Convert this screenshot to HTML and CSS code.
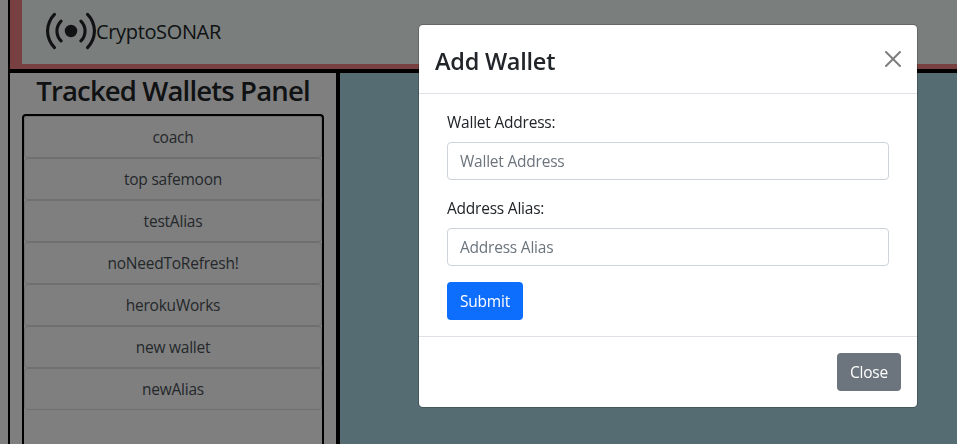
FILE: index.html
```html
<!DOCTYPE html>
<html lang="en">
<head>
<meta charset="utf-8">
<title>CryptoSONAR</title>
<link rel="stylesheet" href="styles.css">
</head>
<body>
<div class="app">
  <header class="header">
    <div class="navbar">
      <svg class="logo" viewBox="0 0 16 16" fill="currentColor"><path d="M3.05 3.05a7 7 0 0 0 0 9.9.5.5 0 0 1-.707.707 8 8 0 0 1 0-11.314.5.5 0 0 1 .707.707zm2.122 2.122a4 4 0 0 0 0 5.656.5.5 0 1 1-.708.708 5 5 0 0 1 0-7.072.5.5 0 0 1 .708.708zm5.656-.708a.5.5 0 0 1 .708 0 5 5 0 0 1 0 7.072.5.5 0 1 1-.708-.708 4 4 0 0 0 0-5.656.5.5 0 0 1 0-.708zm2.122-2.12a.5.5 0 0 1 .707 0 8 8 0 0 1 0 11.313.5.5 0 0 1-.707-.707 7 7 0 0 0 0-9.9.5.5 0 0 1 0-.707zM10 8a2 2 0 1 1-4 0 2 2 0 0 1 4 0z"/></svg>
      <span class="brand">CryptoSONAR</span>
    </div>
  </header>
  <div class="content">
    <aside class="sidebar">
      <h2 class="panel-title">Tracked Wallets Panel</h2>
      <div class="wallets">
        <div class="wallet">coach</div>
        <div class="wallet">top safemoon</div>
        <div class="wallet">testAlias</div>
        <div class="wallet">noNeedToRefresh!</div>
        <div class="wallet">herokuWorks</div>
        <div class="wallet">new wallet</div>
        <div class="wallet">newAlias</div>
      </div>
    </aside>
    <main class="main"></main>
  </div>
</div>
<div class="backdrop">
  <div class="modal">
    <div class="modal-header">
      <h4 class="modal-title">Add Wallet</h4>
      <svg class="close-icon" viewBox="0 0 16 16"><path d="M.293.293a1 1 0 0 1 1.414 0L8 6.586 14.293.293a1 1 0 1 1 1.414 1.414L9.414 8l6.293 6.293a1 1 0 0 1-1.414 1.414L8 9.414l-6.293 6.293a1 1 0 0 1-1.414-1.414L6.586 8 .293 1.707a1 1 0 0 1 0-1.414z"/></svg>
    </div>
    <form class="modal-body">
      <label class="label" for="address">Wallet Address:</label>
      <input class="input" id="address" placeholder="Wallet Address">
      <label class="label" for="alias">Address Alias:</label>
      <input class="input" id="alias" placeholder="Address Alias">
      <button class="btn submit" type="button">Submit</button>
    </form>
    <div class="modal-footer">
      <button class="btn close" type="button">Close</button>
    </div>
  </div>
</div>
</body>
</html>
```

FILE: styles.css
```css
* { box-sizing: border-box; }
body {
  margin: 0;
  height: 444px;
  overflow: hidden;
  background: #fff;
  color: #212529;
  font: 15.5px/24px "Open Sans", "Noto Sans", sans-serif;
  letter-spacing: -0.22px;
}
h2, h4 { margin: 0; }
.app {
  display: flex;
  flex-direction: column;
  height: 444px;
  margin-left: 8px;
  border-left: 2px solid #000;
}
.header {
  height: 73px;
  padding: 0 0 5px 12px;
  background: lightcoral;
  background-clip: padding-box;
  border-bottom: 4px solid #000;
}
.navbar {
  display: flex;
  align-items: center;
  height: 64px;
  padding: 0 24px 2px;
  background: mintcream;
}
.logo { width: 50px; height: 50px; }
.brand { font-size: 20px; letter-spacing: -0.35px; margin-top: 2px; }
.content { display: flex; flex: 1; }
.sidebar {
  display: flex;
  flex-direction: column;
  width: 330px;
  padding: 0 12px;
  border-right: 4px solid #000;
}
.panel-title {
  height: 41px;
  line-height: 36px;
  font-size: 27.5px;
  font-weight: 600;
  letter-spacing: -0.85px;
  text-align: center;
  white-space: nowrap;
}
.wallets {
  flex: 1;
  border: 2px solid #000;
  border-bottom: 0;
  border-radius: 4px 4px 0 0;
}
.wallet {
  height: 42px;
  line-height: 41px;
  border: 1px solid rgba(0, 0, 0, .125);
  border-radius: 4px;
  color: #495057;
  text-align: center;
}
.main { flex: 1; background: lightblue; }
.backdrop {
  position: fixed;
  inset: 0;
  padding: 24px 0 0 418px;
  background: rgba(0, 0, 0, .5);
}
.modal {
  width: 500px;
  height: 384px;
  background: #fff;
  background-clip: padding-box;
  border: 1px solid rgba(0, 0, 0, .2);
  border-radius: 5px;
}
.modal-header {
  display: flex;
  align-items: center;
  justify-content: space-between;
  height: 69px;
  padding: 0 16px;
  border-bottom: 1px solid #dee2e6;
}
.modal-title {
  font-size: 23.5px;
  font-weight: 600;
  line-height: 36px;
  letter-spacing: -0.25px;
  padding-bottom: 0;
  margin-top: 3px;
}
.close-icon { width: 16px; height: 16px; opacity: .5; }
.modal-body {
  display: flex;
  flex-direction: column;
  align-items: flex-start;
  padding: 16px 28px;
}
.label { margin-bottom: 8px; }
.input {
  width: 442px;
  height: 38px;
  margin: 0 0 16px;
  padding: 6px 12px;
  border: 1px solid #ced4da;
  border-radius: 4px;
  background: #fff;
  font: inherit;
  letter-spacing: inherit;
}
.input::placeholder { color: #6c757d; opacity: 1; }
.btn {
  height: 38px;
  padding: 0;
  border: 0;
  border-radius: 4px;
  color: #fff;
  font: inherit;
  letter-spacing: inherit;
}
.submit { width: 76px; background: #0d6efd; }
.close { width: 64px; background: #6c757d; }
.modal-footer {
  display: flex;
  justify-content: flex-end;
  padding: 16px;
  border-top: 1px solid #dee2e6;
}
```
